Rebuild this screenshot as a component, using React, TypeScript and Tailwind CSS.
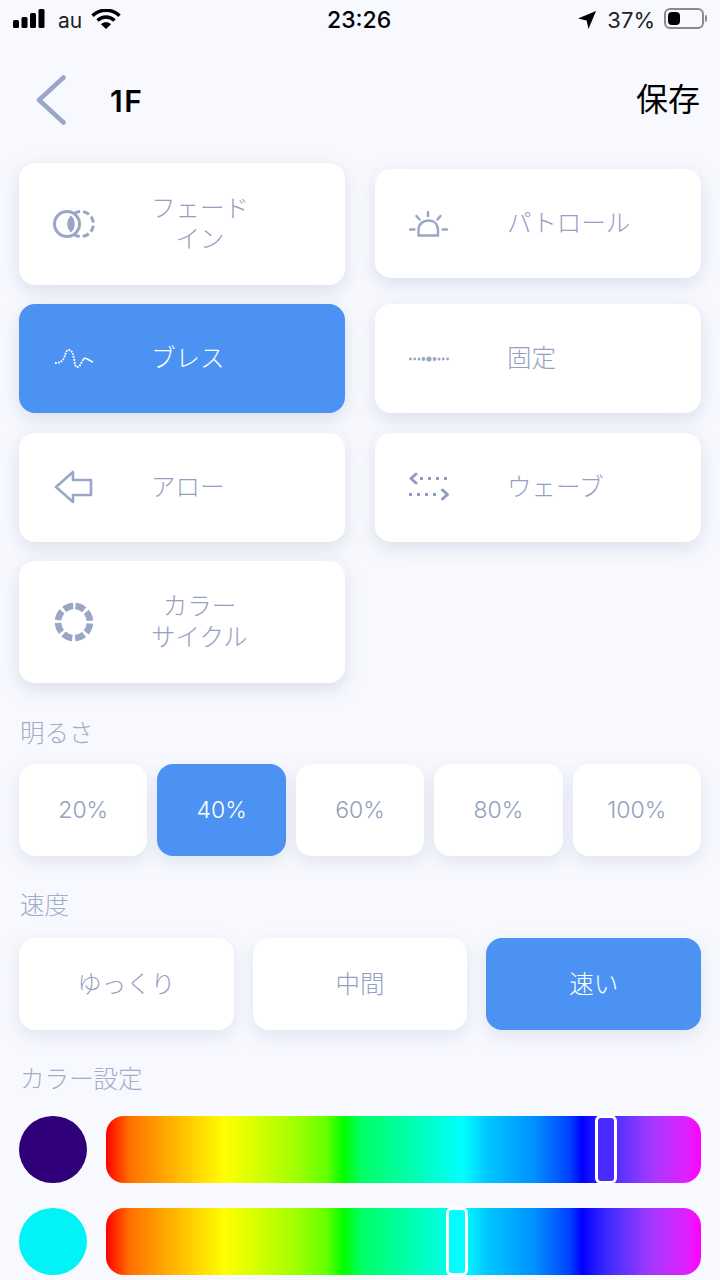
const jpFont = "font-['Inter','Noto_Sans_CJK_JP',sans-serif]";

function StatusBar() {
    return (
        <div className="relative flex h-[40px] items-center justify-between pl-[13px] pr-[13px] text-black">
            <div className="flex items-center">
                <svg className="mb-[3px]" width="32" height="19" viewBox="0 0 32 19" fill="black">
                    <rect x="0" y="11" width="6" height="8" rx="1.5" />
                    <rect x="8.5" y="8" width="6" height="11" rx="1.5" />
                    <rect x="17" y="4" width="6" height="15" rx="1.5" />
                    <rect x="25.5" y="0" width="6" height="19" rx="1.5" />
                </svg>
                <span className="ml-[13px] font-['Inter',sans-serif] text-[21px] leading-none text-[#222]">au</span>
                <svg className="mb-[3px] ml-[9px]" width="30" height="20" viewBox="0 0 30 20" fill="none" stroke="black" strokeWidth="3.4">
                    <path d="M1.5 6.8C9 -0.6 21 -0.6 28.5 6.8" />
                    <path d="M6.5 11.5C11.5 6.8 18.5 6.8 23.5 11.5" />
                    <path d="M15 20L10 15.2C13 12.6 17 12.6 20 15.2Z" fill="black" stroke="none" />
                </svg>
            </div>
            <span className="absolute left-[327px] font-['Inter',sans-serif] text-[23px] leading-none font-medium">23:26</span>
            <div className="flex items-center">
                <svg width="18" height="18" viewBox="0 0 18 18" fill="black">
                    <path d="M18 0L10.5 18L8.6 9.6L0 7.5Z" />
                </svg>
                <span className="ml-[11px] font-['Inter',sans-serif] text-[22px] leading-none text-[#222]">37%</span>
                <div className="mb-[3px] ml-[9px] flex items-center">
                    <div className="flex h-[21px] w-[40px] items-center rounded-[6px] border-2 border-[#8a8a8a] p-[2px]">
                        <div className="h-full w-[12px] rounded-[4px] bg-black" />
                    </div>
                    <div className="ml-[1px] h-[7px] w-[2px] rounded-r bg-[#8a8a8a]" />
                </div>
            </div>
        </div>
    );
}

function Header() {
    return (
        <div className="flex h-[123px] items-start justify-between pt-[35px] pl-[36px] pr-[20px]">
            <div className="flex items-center">
                <svg width="31" height="50" viewBox="0 0 31 50" fill="none" stroke="#9aa6c6" strokeWidth="4.5" strokeLinecap="round" strokeLinejoin="round">
                    <path d="M27.5 2.5L3 25L27.5 47.5" />
                </svg>
                <span className="mt-[2px] ml-[43px] font-['Inter',sans-serif] text-[30px] leading-none font-semibold tracking-[1.5px] text-black">1F</span>
            </div>
            <span className={`${jpFont} mt-[6px] text-[32px] leading-[38px] text-black`}>保存</span>
        </div>
    );
}

function FadeIcon() {
    return (
        <svg width="42" height="30" viewBox="0 0 42 30" fill="none" stroke="#9aa6c6" strokeWidth="3">
            <circle cx="14" cy="15" r="12.5" />
            <path d="M21 4.6A12.5 12.5 0 1 1 21 25.4" strokeDasharray="6.5 3" />
            <path d="M18 6.5C23 11 23 19 18 23.5C13 19 13 11 18 6.5Z" fill="#9aa6c6" stroke="none" />
        </svg>
    );
}

function BreathIcon() {
    return (
        <svg width="42" height="22" viewBox="0 0 42 22" fill="none" stroke="white" strokeWidth="1.9">
            <path d="M2 15C6 15 9 14 11 10C13 5 13 2 16 2C19 2 20 6 21 11C22 16 22 19 24.5 19C27 19 28 15 30 12" strokeDasharray="1.8 1.1" />
            <path d="M30 12C31 10 32 10 33 10.5C35 11 37 13 40 14" strokeWidth="1.5" />
        </svg>
    );
}

function PatrolIcon() {
    return (
        <svg width="40" height="26" viewBox="0 0 40 26" fill="none" stroke="#9aa6c6" strokeWidth="2.4" strokeLinecap="round">
            <path d="M9.5 24.5V19C9.5 13 14 9.5 19.5 9.5C25 9.5 29 13 29 19V24.5Z" strokeLinejoin="round" />
            <path d="M19 1V5M7.5 5L10.5 8.5M31.5 5L28.5 8.5M1 18.5H5.5M33.5 18.5H38" />
        </svg>
    );
}

function FixedIcon() {
    return (
        <svg width="40" height="8" viewBox="0 0 40 8" fill="#9aa6c6">
            <circle cx="1.4" cy="4" r="1.4" />
            <circle cx="5.7" cy="4" r="1.4" />
            <circle cx="10" cy="4" r="1.5" />
            <circle cx="14.5" cy="4" r="1.9" />
            <circle cx="20" cy="4" r="2.6" />
            <circle cx="25.5" cy="4" r="1.9" />
            <circle cx="30" cy="4" r="1.5" />
            <circle cx="34.3" cy="4" r="1.4" />
            <circle cx="38.6" cy="4" r="1.4" />
        </svg>
    );
}

function ArrowIcon() {
    return (
        <svg width="42" height="34" viewBox="0 0 42 34" fill="none" stroke="#9aa6c6" strokeWidth="2.6" strokeLinejoin="round">
            <path d="M3 17L20 2V10H38V25H20V32Z" />
        </svg>
    );
}

function WaveIcon() {
    return (
        <svg width="42" height="30" viewBox="0 0 42 30" fill="none" stroke="#8f9cc0">
            <path d="M7 2L2 6.5L7 11" strokeWidth="3" strokeLinecap="round" strokeLinejoin="round" />
            <path d="M11 6.5H40" strokeWidth="3" strokeDasharray="3 5" />
            <path d="M0 22.5H30" strokeWidth="3" strokeDasharray="3 5" />
            <path d="M33.5 18L38.5 22.5L33.5 27" strokeWidth="3" strokeLinecap="round" strokeLinejoin="round" />
        </svg>
    );
}

function CycleIcon() {
    return (
        <svg width="42" height="40" viewBox="0 0 42 40" fill="none" stroke="#9aa6c6" strokeWidth="6.5">
            <circle cx="21" cy="20" r="16" strokeDasharray="9.7 2.87" strokeDashoffset="-1.4" transform="rotate(-90 21 20)" />
        </svg>
    );
}

type Mode = { label: string[]; icon: React.ReactNode; active?: boolean; className?: string };

function ModeCard({ label, icon, active, className }: Mode) {
    return (
        <div className={`flex min-h-[109px] items-center rounded-[16px] py-[30px] pl-[34px] shadow-[0_6px_18px_rgba(130,145,185,0.25)] ${active ? "bg-[#4c92f2] text-white" : "bg-white text-[#94a0c2]"} ${className ?? ""}`}>
            <div className="flex w-[42px] items-center">{icon}</div>
            <div className={`${jpFont} ml-[56px] text-center text-[24.5px] leading-[31px] font-light`}>
                {label.map((l) => (
                    <div key={l}>{l}</div>
                ))}
            </div>
        </div>
    );
}

function Option({ label, active }: { label: string; active?: boolean }) {
    return (
        <div className={`${jpFont} flex h-[92px] flex-1 items-center justify-center rounded-[16px] text-[24.5px] font-light shadow-[0_6px_18px_rgba(130,145,185,0.2)] ${active ? "bg-[#4c92f2] text-white" : "bg-white text-[#94a0c2]"}`}>
            {label}
        </div>
    );
}

function Percent({ label, active }: { label: string; active?: boolean }) {
    return (
        <div className={`flex h-[92px] flex-1 items-center justify-center rounded-[16px] font-['Inter',sans-serif] text-[23px] font-light shadow-[0_6px_18px_rgba(130,145,185,0.2)] ${active ? "bg-[#4c92f2] text-white" : "bg-white text-[#94a0c2]"}`}>
            {label}
        </div>
    );
}

function SectionLabel({ text, className }: { text: string; className: string }) {
    return <div className={`${jpFont} pl-[1px] text-[24.5px] leading-[31px] font-light text-[#a1acc9] ${className}`}>{text}</div>;
}

function ColorRow({ swatch, thumbClass }: { swatch: string; thumbClass: string }) {
    return (
        <div className="flex items-center gap-[19px]">
            <div className={`h-[67px] w-[68px] rounded-full ${swatch}`} />
            <div className="relative h-[67px] flex-1 rounded-[18px] bg-[linear-gradient(to_right,#f00_0%,#ff7000_4%,#ffa800_10%,#ff0_20%,#a0ff00_32%,#66ff00_37%,#0f0_40%,#00ff66_43%,#00ff99_49%,#0ff_60%,#00c8ff_64%,#0090ff_72%,#0040ff_78%,#00f_80%,#3a28ff_84%,#6a35ff_87.5%,#a838ff_92%,#e020ff_97.7%,#f0f_100%)]">
                <div className={`absolute top-[-1px] h-[69px] w-[22px] rounded-[6px] border-[3.5px] border-white ${thumbClass}`} />
            </div>
        </div>
    );
}

const modes: Mode[] = [
    { label: ["フェード", "イン"], icon: <FadeIcon /> },
    { label: ["パトロール"], icon: <PatrolIcon />, className: "mb-[1px]" },
    { label: ["ブレス"], icon: <BreathIcon />, active: true },
    { label: ["固定"], icon: <FixedIcon /> },
    { label: ["アロー"], icon: <ArrowIcon /> },
    { label: ["ウェーブ"], icon: <WaveIcon /> },
    { label: ["カラー", "サイクル"], icon: <CycleIcon /> },
];

export default function App() {
    return (
        <div className="h-[1280px] w-[720px] overflow-hidden bg-[#f8f9fe]">
            <StatusBar />
            <Header />
            <div className="px-[19px]">
                <div className="grid grid-cols-2 items-center gap-x-[30px] gap-y-[19.25px]">
                    {modes.map((m) => (
                        <ModeCard key={m.label.join("")} {...m} />
                    ))}
                </div>

                <SectionLabel text="明るさ" className="mt-[35px] mb-[15.25px]" />
                <div className="flex gap-[10px]">
                    <Percent label="20%" />
                    <Percent label="40%" active />
                    <Percent label="60%" />
                    <Percent label="80%" />
                    <Percent label="100%" />
                </div>

                <SectionLabel text="速度" className="mt-[34px] mb-[17px]" />
                <div className="flex gap-[19px]">
                    <Option label="ゆっくり" />
                    <Option label="中間" />
                    <Option label="速い" active />
                </div>

                <SectionLabel text="カラー設定" className="mt-[34px] mb-[21px]" />
                <div className="flex flex-col gap-[25px]">
                    <ColorRow swatch="bg-[#2f007a]" thumbClass="left-[489px] bg-[#4a2bff]" />
                    <ColorRow swatch="bg-[#00f3f7]" thumbClass="left-[340px] bg-[#00ffff]" />
                </div>
            </div>
        </div>
    );
}
